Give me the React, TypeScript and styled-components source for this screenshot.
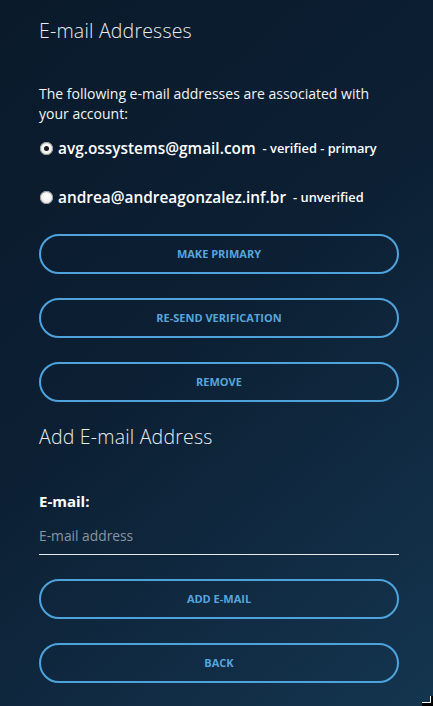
import React from "react";
import styled, { createGlobalStyle } from "styled-components";

const Global = createGlobalStyle`
  html, body { margin: 0; padding: 0; }
  body { font-family: "Open Sans", "Noto Sans", sans-serif; background: #0c1d30; }
`;

const Page = styled.div`
  position: relative;
  min-height: 706px;
  box-sizing: border-box;
  padding: 19px 34px 0 39px;
  background: linear-gradient(140deg, #0a1a2b 0%, #0c1f33 45%, #14354f 100%);
  color: #ffffff;
  display: flex;
  flex-direction: column;
  overflow: hidden;
`;

const Title = styled.h2<{ $mt?: number }>`
  margin: ${(p) => p.$mt ?? 0}px 0 0 0;
  font-size: 19.5px;
  line-height: 24px;
  font-weight: 300;
  letter-spacing: 0.2px;
  color: #e9edf1;
`;

const Intro = styled.p`
  margin: 41px 0 0 0;
  font-size: 14px;
  line-height: 20px;
  color: #f2f4f6;
`;

const EmailList = styled.div`
  margin-top: 14px;
  display: flex;
  flex-direction: column;
  gap: 29px;
`;

const EmailRow = styled.label`
  display: flex;
  align-items: center;
  height: 20px;
  gap: 5px;
`;

const Radio = styled.span<{ $checked?: boolean }>`
  width: 13px;
  height: 13px;
  border-radius: 50%;
  margin-left: 1px;
  background: radial-gradient(circle at 50% 40%, #ffffff 0%, #f2f2f2 55%, #cfcfcf 100%);
  box-shadow: inset 0 0 0 1px #9a9a9a;
  display: flex;
  align-items: center;
  justify-content: center;
  &::after {
    content: "";
    width: 5px;
    height: 5px;
    border-radius: 50%;
    background: ${(p) => (p.$checked ? "#1b1b1b" : "transparent")};
  }
`;

const Address = styled.span`
  font-size: 15.4px;
  font-weight: 600;
  color: #ffffff;
`;

const Status = styled.span`
  font-size: 12.8px;
  font-weight: 600;
  color: #ffffff;
  margin-left: 2px;
`;

const ButtonGroup = styled.div<{ $mt: number }>`
  margin-top: ${(p) => p.$mt}px;
  display: flex;
  flex-direction: column;
  gap: 24px;
  width: 360px;
`;

const PillButton = styled.button`
  box-sizing: border-box;
  height: 40px;
  width: 100%;
  padding: 0 0 1px 0;
  border: 2px solid #4fa3dd;
  border-radius: 20px;
  background: transparent;
  color: #56a6dd;
  font-family: "Open Sans", "Noto Sans", sans-serif;
  font-size: 11px;
  font-weight: 700;
  text-transform: uppercase;
  cursor: pointer;
`;

const FieldLabel = styled.div`
  margin-top: 42px;
  font-size: 15px;
  line-height: 20px;
  font-weight: 700;
  color: #ffffff;
`;

const TextInput = styled.input`
  margin-top: 8px;
  box-sizing: border-box;
  width: 360px;
  height: 36px;
  padding: 0 0 3px 0;
  border: none;
  border-bottom: 1px solid #e6e9ec;
  background: transparent;
  color: #ffffff;
  font-family: "Open Sans", "Noto Sans", sans-serif;
  font-size: 13.8px;
  outline: none;
  &::placeholder {
    color: #8995a1;
  }
`;

const CornerMark = styled.svg`
  position: absolute;
  right: 0;
  bottom: 0;
`;

export default function App() {
  return (
    <>
      <Global />
      <Page>
        <Title>E-mail Addresses</Title>
        <Intro>
          The following e-mail addresses are associated with
          <br />
          your account:
        </Intro>
        <EmailList>
          <EmailRow>
            <Radio $checked />
            <Address>avg.ossystems@gmail.com</Address>
            <Status>- verified - primary</Status>
          </EmailRow>
          <EmailRow>
            <Radio />
            <Address>andrea@andreagonzalez.inf.br</Address>
            <Status>- unverified</Status>
          </EmailRow>
        </EmailList>
        <ButtonGroup $mt={27}>
          <PillButton>Make Primary</PillButton>
          <PillButton>Re-send Verification</PillButton>
          <PillButton>Remove</PillButton>
        </ButtonGroup>
        <Title $mt={23}>Add E-mail Address</Title>
        <FieldLabel>E-mail:</FieldLabel>
        <TextInput placeholder="E-mail address" />
        <ButtonGroup $mt={24}>
          <PillButton>Add E-mail</PillButton>
          <PillButton>Back</PillButton>
        </ButtonGroup>
        <CornerMark width="11" height="10" viewBox="0 0 11 10">
          <path d="M8.5 0 V6.5 H0" fill="none" stroke="#ffffff" strokeWidth="1" />
          <rect x="0" y="7" width="11" height="3" fill="#000000" />
          <rect x="9" y="0" width="2" height="10" fill="#000000" />
        </CornerMark>
      </Page>
    </>
  );
}
